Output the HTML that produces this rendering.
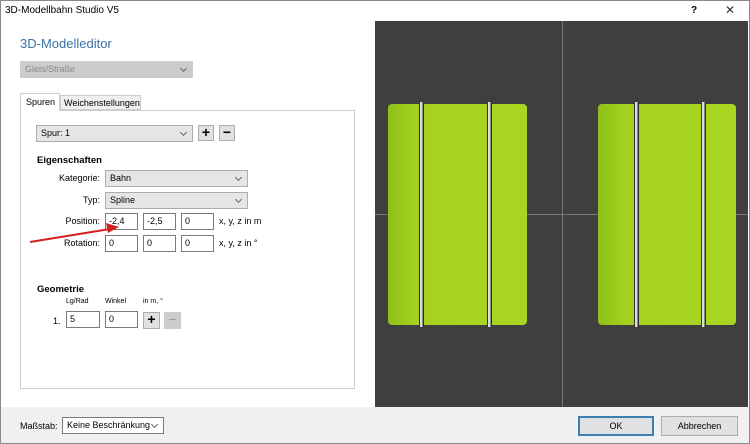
<!DOCTYPE html>
<html><head><meta charset="utf-8"><style>
*{box-sizing:border-box;margin:0;padding:0}
body{width:750px;height:444px;position:relative;background:#fff;font-family:"Liberation Sans",sans-serif;font-size:9px;color:#000;overflow:hidden}
.a{position:absolute}
.dd{position:absolute;background:#e5e5e5;border:1px solid #adadad;padding:2px 4px;height:17px;line-height:11px}
.dd:after{content:"";position:absolute;right:6px;top:4px;width:4px;height:4px;border-right:1px solid #666;border-bottom:1px solid #666;transform:rotate(45deg)}
.in{position:absolute;background:#fff;border:1px solid #7a7a7a;height:17px;padding:2px 3px;line-height:11px}
.lb{position:absolute;text-align:right;line-height:11px}
.btn{position:absolute;background:#e1e1e1;border:1px solid #adadad;text-align:center;font-size:14px;line-height:13px;font-weight:bold}
.rail{position:absolute;width:5px;background:linear-gradient(90deg,#333 0,#333 1px,#ddd 1px,#ddd 3px,#888 3px,#888 4px,#2d2d2d 4px)}
.g{position:absolute;background:linear-gradient(90deg,#8fbf1a,#a5d21f 20%,#a8d620)}
</style></head><body>
<div class="a" style="left:0;top:0;width:750px;height:444px;border:1px solid #888"></div>
<div class="a" style="left:5px;top:5px;font-size:10px">3D-Modellbahn Studio V5</div>
<div class="a" style="left:691px;top:5px;font-size:10px;font-weight:bold">?</div>
<div class="a" style="left:725px;top:3px;font-size:12px;color:#333">✕</div>
<div class="a" style="left:20px;top:36px;font-size:13px;color:#3c72a8">3D-Modelleditor</div>
<div class="dd" style="left:20px;top:61px;width:173px;background:#ccc;border-color:#ccc;color:#888">Gleis/Straße</div>
<div class="a" style="left:20px;top:93px;width:40px;height:18px;background:#fff;border:1px solid #ccc;border-bottom:none;padding:3px 5px;z-index:2">Spuren</div>
<div class="a" style="left:60px;top:95px;width:81px;height:15px;background:#f0f0f0;border:1px solid #ccc;padding:2px 3px">Weichenstellungen</div>
<div class="a" style="left:20px;top:110px;width:335px;height:279px;border:1px solid #ccc"></div>
<div class="dd" style="left:36px;top:125px;width:157px">Spur: 1</div>
<div class="btn" style="left:198px;top:125px;width:16px;height:16px">+</div>
<div class="btn" style="left:219px;top:125px;width:16px;height:16px">−</div>
<div class="a" style="left:37px;top:155px;font-weight:bold;font-size:9.5px">Eigenschaften</div>
<div class="lb" style="left:40px;top:173px;width:60px">Kategorie:</div>
<div class="dd" style="left:105px;top:170px;width:143px">Bahn</div>
<div class="lb" style="left:40px;top:195px;width:60px">Typ:</div>
<div class="dd" style="left:105px;top:192px;width:143px">Spline</div>
<div class="lb" style="left:40px;top:216px;width:60px">Position:</div>
<div class="in" style="left:105px;top:213px;width:33px">-2,4</div>
<div class="in" style="left:143px;top:213px;width:33px">-2,5</div>
<div class="in" style="left:181px;top:213px;width:33px">0</div>
<div class="a" style="left:219px;top:216px">x, y, z in m</div>
<div class="lb" style="left:40px;top:238px;width:60px">Rotation:</div>
<div class="in" style="left:105px;top:235px;width:33px">0</div>
<div class="in" style="left:143px;top:235px;width:33px">0</div>
<div class="in" style="left:181px;top:235px;width:33px">0</div>
<div class="a" style="left:219px;top:238px">x, y, z in °</div>
<svg class="a" style="left:28px;top:220px" width="95" height="25"><line x1="2" y1="22" x2="82" y2="9" stroke="#d42020" stroke-width="2"/><polygon points="91,7 78,3 80,13" fill="#d42020"/></svg>
<div class="a" style="left:37px;top:284px;font-weight:bold;font-size:9.5px">Geometrie</div>
<div class="a" style="left:66px;top:298px;font-size:7px">Lg/Rad</div>
<div class="a" style="left:105px;top:298px;font-size:7px">Winkel</div>
<div class="a" style="left:143px;top:298px;font-size:7px">in m, °</div>
<div class="a" style="left:53px;top:316px">1.</div>
<div class="in" style="left:66px;top:311px;width:34px">5</div>
<div class="in" style="left:105px;top:311px;width:33px">0</div>
<div class="btn" style="left:143px;top:312px;width:17px;height:17px">+</div>
<div class="btn" style="left:164px;top:312px;width:17px;height:17px;background:#ccc;border-color:#ccc;color:#999;font-weight:normal">−</div>
<div class="a" style="left:375px;top:21px;width:373px;height:386px;background:#3f3f3f"></div>
<div class="a" style="left:562px;top:21px;width:1px;height:386px;background:#777"></div>
<div class="a" style="left:375px;top:214px;width:373px;height:1px;background:#777"></div>
<div class="g" style="left:388px;top:104px;width:139px;height:221px;border-radius:4px"></div>
<div class="rail" style="left:419px;top:102px;height:225px"></div>
<div class="rail" style="left:487px;top:102px;height:225px"></div>
<div class="g" style="left:598px;top:104px;width:138px;height:221px;border-radius:4px"></div>
<div class="rail" style="left:634px;top:102px;height:225px"></div>
<div class="rail" style="left:701px;top:102px;height:225px"></div>
<div class="a" style="left:1px;top:407px;width:748px;height:36px;background:#f0f0f0"></div>
<div class="a" style="left:20px;top:421px">Maßstab:</div>
<div class="dd" style="left:62px;top:417px;width:102px;background:#fff;border-color:#7a7a7a">Keine Beschränkung</div>
<div class="a" style="left:578px;top:416px;width:76px;height:20px;background:#e1e1e1;border:2px solid #3c7fb1;text-align:center;line-height:16px">OK</div>
<div class="a" style="left:661px;top:416px;width:77px;height:20px;background:#e1e1e1;border:1px solid #adadad;text-align:center;line-height:18px">Abbrechen</div>
</body></html>
